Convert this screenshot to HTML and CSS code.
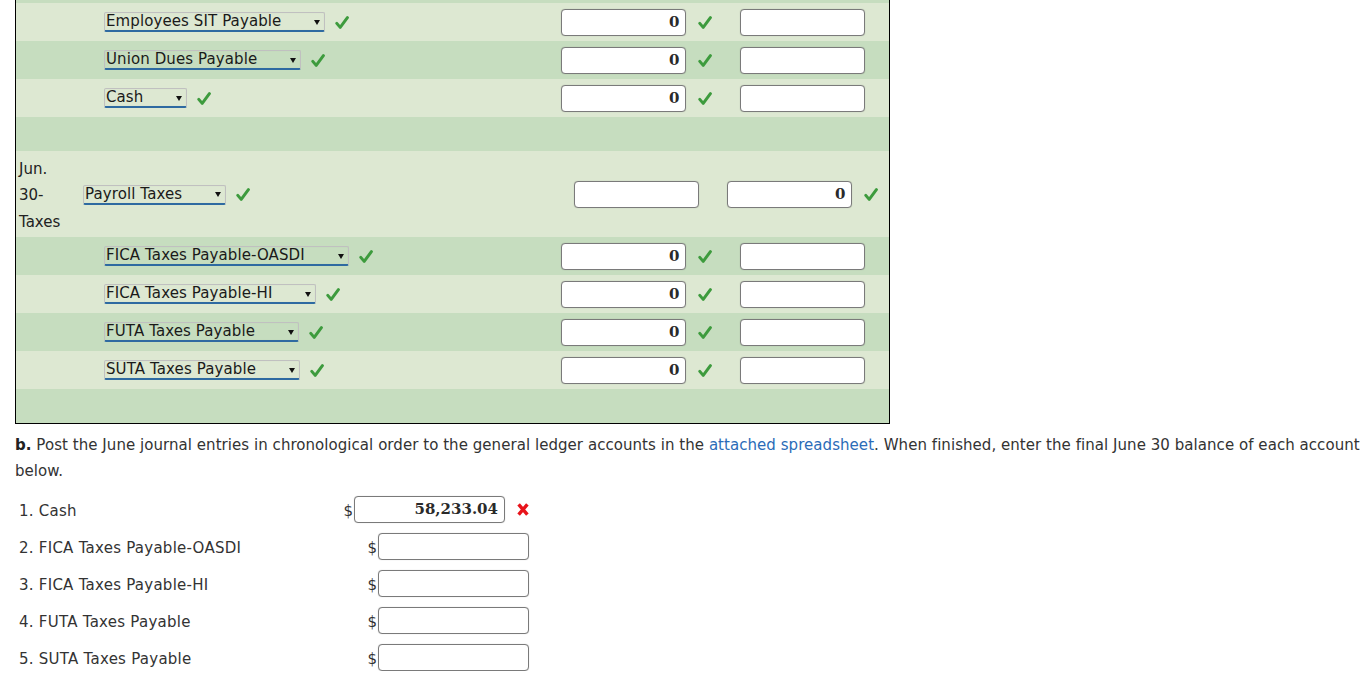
FILE: index.html
```html
<!DOCTYPE html>
<html>
<head>
<meta charset="utf-8">
<link rel="stylesheet" href="styles.css">
</head>
<body>
<div class="page">
  <div class="journal">
    <div class="strip dark"></div>

    <div class="row light">
      <div class="date"></div>
      <div class="acct indent"><span class="sel">Employees SIT Payable<i class="arr"></i></span><svg class="ok" viewBox="0 0 14 15"><path d="M1.8 8.4 L5.2 12.4 L12.4 2.6"/></svg></div>
      <div class="amt"><span class="box">0</span><svg class="ok" viewBox="0 0 14 15"><path d="M1.8 8.4 L5.2 12.4 L12.4 2.6"/></svg></div>
      <div class="amt"><span class="box"></span></div>
    </div>

    <div class="row dark">
      <div class="date"></div>
      <div class="acct indent"><span class="sel">Union Dues Payable<i class="arr"></i></span><svg class="ok" viewBox="0 0 14 15"><path d="M1.8 8.4 L5.2 12.4 L12.4 2.6"/></svg></div>
      <div class="amt"><span class="box">0</span><svg class="ok" viewBox="0 0 14 15"><path d="M1.8 8.4 L5.2 12.4 L12.4 2.6"/></svg></div>
      <div class="amt"><span class="box"></span></div>
    </div>

    <div class="row light">
      <div class="date"></div>
      <div class="acct indent"><span class="sel">Cash<i class="arr"></i></span><svg class="ok" viewBox="0 0 14 15"><path d="M1.8 8.4 L5.2 12.4 L12.4 2.6"/></svg></div>
      <div class="amt"><span class="box">0</span><svg class="ok" viewBox="0 0 14 15"><path d="M1.8 8.4 L5.2 12.4 L12.4 2.6"/></svg></div>
      <div class="amt"><span class="box"></span></div>
    </div>

    <div class="row empty dark"></div>

    <div class="row tall light">
      <div class="date">Jun.<br>30-<br>Taxes</div>
      <div class="acct"><span class="sel">Payroll Taxes<i class="arr"></i></span><svg class="ok" viewBox="0 0 14 15"><path d="M1.8 8.4 L5.2 12.4 L12.4 2.6"/></svg></div>
      <div class="amt"><span class="box"></span></div>
      <div class="amt"><span class="box">0</span><svg class="ok" viewBox="0 0 14 15"><path d="M1.8 8.4 L5.2 12.4 L12.4 2.6"/></svg></div>
    </div>

    <div class="row dark">
      <div class="date"></div>
      <div class="acct indent"><span class="sel">FICA Taxes Payable-OASDI<i class="arr"></i></span><svg class="ok" viewBox="0 0 14 15"><path d="M1.8 8.4 L5.2 12.4 L12.4 2.6"/></svg></div>
      <div class="amt"><span class="box">0</span><svg class="ok" viewBox="0 0 14 15"><path d="M1.8 8.4 L5.2 12.4 L12.4 2.6"/></svg></div>
      <div class="amt"><span class="box"></span></div>
    </div>

    <div class="row light">
      <div class="date"></div>
      <div class="acct indent"><span class="sel">FICA Taxes Payable-HI<i class="arr"></i></span><svg class="ok" viewBox="0 0 14 15"><path d="M1.8 8.4 L5.2 12.4 L12.4 2.6"/></svg></div>
      <div class="amt"><span class="box">0</span><svg class="ok" viewBox="0 0 14 15"><path d="M1.8 8.4 L5.2 12.4 L12.4 2.6"/></svg></div>
      <div class="amt"><span class="box"></span></div>
    </div>

    <div class="row dark">
      <div class="date"></div>
      <div class="acct indent"><span class="sel">FUTA Taxes Payable<i class="arr"></i></span><svg class="ok" viewBox="0 0 14 15"><path d="M1.8 8.4 L5.2 12.4 L12.4 2.6"/></svg></div>
      <div class="amt"><span class="box">0</span><svg class="ok" viewBox="0 0 14 15"><path d="M1.8 8.4 L5.2 12.4 L12.4 2.6"/></svg></div>
      <div class="amt"><span class="box"></span></div>
    </div>

    <div class="row light">
      <div class="date"></div>
      <div class="acct indent"><span class="sel">SUTA Taxes Payable<i class="arr"></i></span><svg class="ok" viewBox="0 0 14 15"><path d="M1.8 8.4 L5.2 12.4 L12.4 2.6"/></svg></div>
      <div class="amt"><span class="box">0</span><svg class="ok" viewBox="0 0 14 15"><path d="M1.8 8.4 L5.2 12.4 L12.4 2.6"/></svg></div>
      <div class="amt"><span class="box"></span></div>
    </div>

    <div class="row empty dark"></div>
  </div>

  <p class="instr"><b>b.</b> Post the June journal entries in chronological order to the general ledger accounts in the <a class="link">attached spreadsheet</a>. When finished, enter the final June 30 balance of each account below.</p>

  <div class="balances">
    <div class="bal-row">
      <span class="label">1. Cash</span>
      <span class="money"><span class="dollar">$</span><span class="field">58,233.04</span><svg class="bad" viewBox="0 0 12 13"><path d="M1.6 1.4 L10.4 11.6 M10.4 1.4 L1.6 11.6"/></svg></span>
    </div>
    <div class="bal-row">
      <span class="label">2. FICA Taxes Payable-OASDI</span>
      <span class="money"><span class="dollar">$</span><span class="field"></span></span>
    </div>
    <div class="bal-row">
      <span class="label">3. FICA Taxes Payable-HI</span>
      <span class="money"><span class="dollar">$</span><span class="field"></span></span>
    </div>
    <div class="bal-row">
      <span class="label">4. FUTA Taxes Payable</span>
      <span class="money"><span class="dollar">$</span><span class="field"></span></span>
    </div>
    <div class="bal-row">
      <span class="label">5. SUTA Taxes Payable</span>
      <span class="money"><span class="dollar">$</span><span class="field"></span></span>
    </div>
  </div>
</div>
</body>
</html>
```
FILE: styles.css
```css
html, body {
  margin: 0;
  padding: 0;
  background: #fff;
}
body {
  font-family: "DejaVu Sans", Verdana, sans-serif;
  font-size: 15px;
  color: #333;
}
.page {
  padding-left: 15px;
}
.journal {
  width: 873px;
  border-left: 1px solid #000;
  border-right: 1px solid #000;
  border-bottom: 1px solid #000;
}
.light { background: #dde8d2; }
.dark { background: #c6ddbf; }
.strip { height: 3px; }
.row {
  display: grid;
  grid-template-columns: 67px 1fr 158px 174px;
  align-items: center;
  height: 38px;
}
.row.empty { height: 34px; }
.row.tall { height: 86px; }
.date {
  padding-left: 3px;
  padding-top: 3px;
  line-height: 26.5px;
  color: #222;
}
.acct {
  display: flex;
  align-items: center;
  padding-top: 1px;
}
.acct.indent { padding-left: 21px; padding-top: 0; }
.sel {
  display: inline-flex;
  align-items: center;
  height: 17px;
  padding: 0 4px 0 1px;
  border: 1px solid #c0c0c0;
  border-bottom: 2px solid #2e6aa1;
  border-radius: 2px;
  color: #1a1a1a;
  line-height: 17px;
  letter-spacing: 0.1px;
  box-shadow: inset 0 0 1px rgba(0,0,0,0.08);
}
.arr {
  display: inline-block;
  width: 0;
  height: 0;
  margin-left: 33px;
  border-left: 3.5px solid transparent;
  border-right: 3.5px solid transparent;
  border-top: 5px solid #111;
  margin-top: 1px;
}
.ok {
  width: 14px;
  height: 15px;
  margin-left: 10px;
  flex: none;
}
.ok path {
  fill: none;
  stroke: #3d9b3d;
  stroke-width: 3;
  stroke-linecap: round;
  stroke-linejoin: round;
}
.amt {
  display: flex;
  justify-content: center;
  align-items: center;
}
.amt .ok { margin-left: 12px; }
.box {
  box-sizing: border-box;
  width: 125px;
  height: 27px;
  background: #fff;
  border: 1px solid #7a7a7a;
  border-radius: 4px;
  box-shadow: 0 0 1px rgba(0,0,0,0.25);
  font-family: "DejaVu Serif", "Liberation Serif", serif;
  font-weight: bold;
  font-size: 15px;
  color: #2a2a2a;
  text-align: right;
  padding-right: 5px;
  line-height: 25px;
}
.instr {
  margin: 8px 0 0 0;
  width: 1357px;
  line-height: 26px;
  letter-spacing: 0.05px;
  color: #333;
}
.instr b { color: #222; }
.link { color: #2b6cb8; }
.balances {
  margin-top: 12px;
  width: 514px;
  display: flex;
  flex-direction: column;
  gap: 10px;
}
.bal-row {
  display: flex;
  align-items: center;
  height: 27px;
}
.label {
  padding-left: 4px;
  color: #333;
  margin-top: 2px;
  letter-spacing: 0.25px;
}
.money {
  margin-left: auto;
  display: flex;
  align-items: center;
}
.dollar {
  color: #333;
  margin-right: 1px;
  margin-top: 2px;
}
.field {
  box-sizing: border-box;
  width: 151px;
  height: 27px;
  background: #fff;
  border: 1px solid #7a7a7a;
  border-radius: 4px;
  box-shadow: 0 0 1px rgba(0,0,0,0.25);
  font-family: "DejaVu Serif", "Liberation Serif", serif;
  font-weight: bold;
  font-size: 15px;
  color: #2a2a2a;
  text-align: right;
  padding-right: 6px;
  line-height: 25px;
}
.bad {
  width: 12px;
  height: 13px;
  margin-left: 12px;
}
.bad path {
  fill: none;
  stroke: #e8141b;
  stroke-width: 3.4;
  stroke-linecap: butt;
}
```
